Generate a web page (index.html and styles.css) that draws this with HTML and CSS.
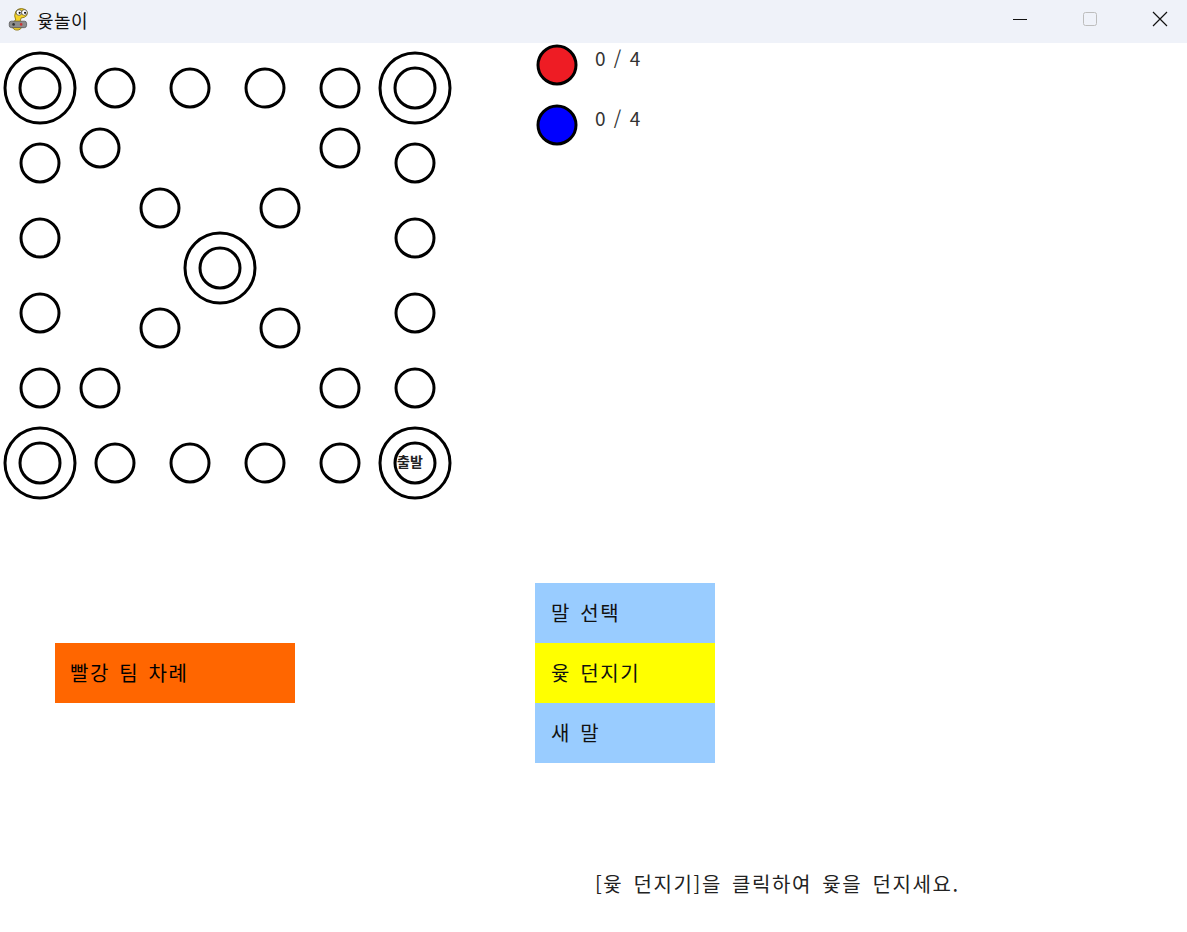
FILE: index.html
```html
<!DOCTYPE html>
<html lang="ko">
<head>
<meta charset="utf-8">
<title>윷놀이</title>
<link rel="stylesheet" href="styles.css">
</head>
<body>
<div class="window">
  <header class="titlebar">
    <div class="title">
      <svg class="appicon" width="26" height="26" viewBox="0 0 24 24">
        <path d="M6 20 Q5 15 9 13 Q7 9 9 5 Q12 1 17 3 Q21 5 19 9 Q17 11 14 11 Q12 13 15 16 Q16 20 12 22 Q8 23 6 20 Z" fill="#f5d328" stroke="#8a7410" stroke-width="0.8"/>
        <circle cx="12" cy="6" r="2.6" fill="#fff" stroke="#333" stroke-width="0.6"/>
        <circle cx="17" cy="6" r="2.6" fill="#fff" stroke="#333" stroke-width="0.6"/>
        <circle cx="12.6" cy="6.3" r="1" fill="#111"/>
        <circle cx="17.6" cy="6.3" r="1" fill="#111"/>
        <rect x="3" y="14" width="16" height="6" rx="2" fill="#8d8d8d" stroke="#444" stroke-width="0.6"/>
        <circle cx="7" cy="17" r="1.2" fill="#333"/>
        <circle cx="14" cy="17" r="1.2" fill="#c33"/>
      </svg>
      <span class="title-text">윷놀이</span>
    </div>
    <div class="controls">
      <span class="ctl"><svg width="16" height="16" viewBox="0 0 16 16"><line x1="1" y1="8.5" x2="15" y2="8.5" stroke="#111" stroke-width="1"/></svg></span>
      <span class="ctl"><svg width="16" height="16" viewBox="0 0 16 16"><rect x="1.5" y="1.5" width="13" height="13" rx="2" fill="none" stroke="#bdbdbd" stroke-width="1"/></svg></span>
      <span class="ctl ctl-close"><svg width="16" height="16" viewBox="0 0 16 16"><path d="M1 1 L15 15 M15 1 L1 15" stroke="#111" stroke-width="1.2"/></svg></span>
    </div>
  </header>

  <main class="content">
    <section class="left">
      <svg class="board" width="460" height="460" viewBox="0 0 460 460">
        <g fill="none" stroke="#000" stroke-width="3">
          <circle cx="40" cy="45" r="35"/><circle cx="40" cy="45" r="20"/>
          <circle cx="415" cy="45" r="35"/><circle cx="415" cy="45" r="20"/>
          <circle cx="40" cy="420" r="35"/><circle cx="40" cy="420" r="20"/>
          <circle cx="415" cy="420" r="35"/><circle cx="415" cy="420" r="20"/>
          <circle cx="220" cy="225" r="35"/><circle cx="220" cy="225" r="20"/>
          <circle cx="115" cy="45" r="19"/><circle cx="190" cy="45" r="19"/>
          <circle cx="265" cy="45" r="19"/><circle cx="340" cy="45" r="19"/>
          <circle cx="115" cy="420" r="19"/><circle cx="190" cy="420" r="19"/>
          <circle cx="265" cy="420" r="19"/><circle cx="340" cy="420" r="19"/>
          <circle cx="40" cy="120" r="19"/><circle cx="40" cy="195" r="19"/>
          <circle cx="40" cy="270" r="19"/><circle cx="40" cy="345" r="19"/>
          <circle cx="415" cy="120" r="19"/><circle cx="415" cy="195" r="19"/>
          <circle cx="415" cy="270" r="19"/><circle cx="415" cy="345" r="19"/>
          <circle cx="100" cy="105" r="19"/><circle cx="160" cy="165" r="19"/>
          <circle cx="280" cy="285" r="19"/><circle cx="340" cy="345" r="19"/>
          <circle cx="340" cy="105" r="19"/><circle cx="280" cy="165" r="19"/>
          <circle cx="160" cy="285" r="19"/><circle cx="100" cy="345" r="19"/>
        </g>
        <text class="start-label" x="410" y="424" text-anchor="middle">출발</text>
      </svg>
      <div class="turn">빨강 팀 차례</div>
    </section>

    <section class="right">
      <div class="scores">
        <div class="score-row">
          <svg class="token" width="44" height="44" viewBox="0 0 44 44"><circle cx="22" cy="22" r="19" fill="#ee1c24" stroke="#000" stroke-width="3"/></svg>
          <span class="score-text">0 / 4</span>
        </div>
        <div class="score-row">
          <svg class="token" width="44" height="44" viewBox="0 0 44 44"><circle cx="22" cy="22" r="19" fill="#0000ff" stroke="#000" stroke-width="3"/></svg>
          <span class="score-text">0 / 4</span>
        </div>
      </div>
      <div class="buttons">
        <div class="btn btn-blue">말 선택</div>
        <div class="btn btn-yellow">윷 던지기</div>
        <div class="btn btn-blue">새 말</div>
      </div>
      <p class="message">[윷 던지기]을 클릭하여 윷을 던지세요.</p>
    </section>
  </main>
</div>
</body>
</html>
```

FILE: styles.css
```css
* { box-sizing: border-box; }
html, body {
  margin: 0;
  padding: 0;
  background: #ffffff;
}
body {
  font-family: "Noto Sans CJK KR", "Noto Sans", sans-serif;
  color: #000;
  width: 1187px;
  height: 932px;
  overflow: hidden;
}
.window {
  width: 1187px;
  height: 932px;
  display: flex;
  flex-direction: column;
}
.titlebar {
  height: 43px;
  background: #eff2f9;
  display: flex;
  align-items: center;
  justify-content: space-between;
  flex: none;
}
.title {
  display: flex;
  align-items: center;
  padding-left: 6px;
  gap: 5px;
}
.appicon { display: block; margin-top: -5px; }
.title-text {
  font-size: 18px;
  letter-spacing: 0.5px;
  color: #111;
  line-height: 20px;
  margin-top: -4px;
}
.controls {
  display: flex;
  height: 100%;
  align-items: center;
  margin-top: -6px;
}
.ctl {
  width: 70px;
  display: flex;
  justify-content: center;
  align-items: center;
}
.ctl-close { width: 54px; margin-left: 8px; }
.ctl svg { display: block; }

.content {
  flex: 1;
  display: grid;
  grid-template-columns: 535px 1fr;
  background: #fff;
}
.left {
  display: flex;
  flex-direction: column;
}
.board { display: block; }
.start-label {
  font-family: "Noto Sans CJK KR", sans-serif;
  font-size: 14px;
  font-weight: 700;
  fill: #222;
}
.turn {
  margin-top: 140px;
  margin-left: 55px;
  width: 240px;
  height: 60px;
  background: #ff6600;
  font-size: 20px;
  line-height: 60px;
  padding-left: 15px;
  color: #000;
  letter-spacing: 1.6px;
  word-spacing: 2px;
}
.right {
  display: flex;
  flex-direction: column;
}
.scores {
  display: flex;
  flex-direction: column;
}
.score-row {
  height: 60px;
  display: flex;
  align-items: flex-start;
}
.token { display: block; }
.score-text {
  margin-left: 16px;
  font-size: 19px;
  line-height: 24px;
  color: #333;
  margin-top: 3px;
  letter-spacing: 0.5px;
  word-spacing: 2px;
}
.buttons {
  margin-top: 420px;
  width: 180px;
  display: flex;
  flex-direction: column;
}
.btn {
  height: 60px;
  line-height: 60px;
  font-size: 20px;
  padding-left: 16px;
  color: #111;
  letter-spacing: 1.6px;
  word-spacing: 2px;
}
.btn-blue { background: #99ccff; }
.btn-yellow { background: #ffff00; }
.message {
  margin: 108px 0 0 60px;
  font-size: 20px;
  line-height: 26px;
  color: #222;
  letter-spacing: 1.6px;
  word-spacing: 3px;
}
```
